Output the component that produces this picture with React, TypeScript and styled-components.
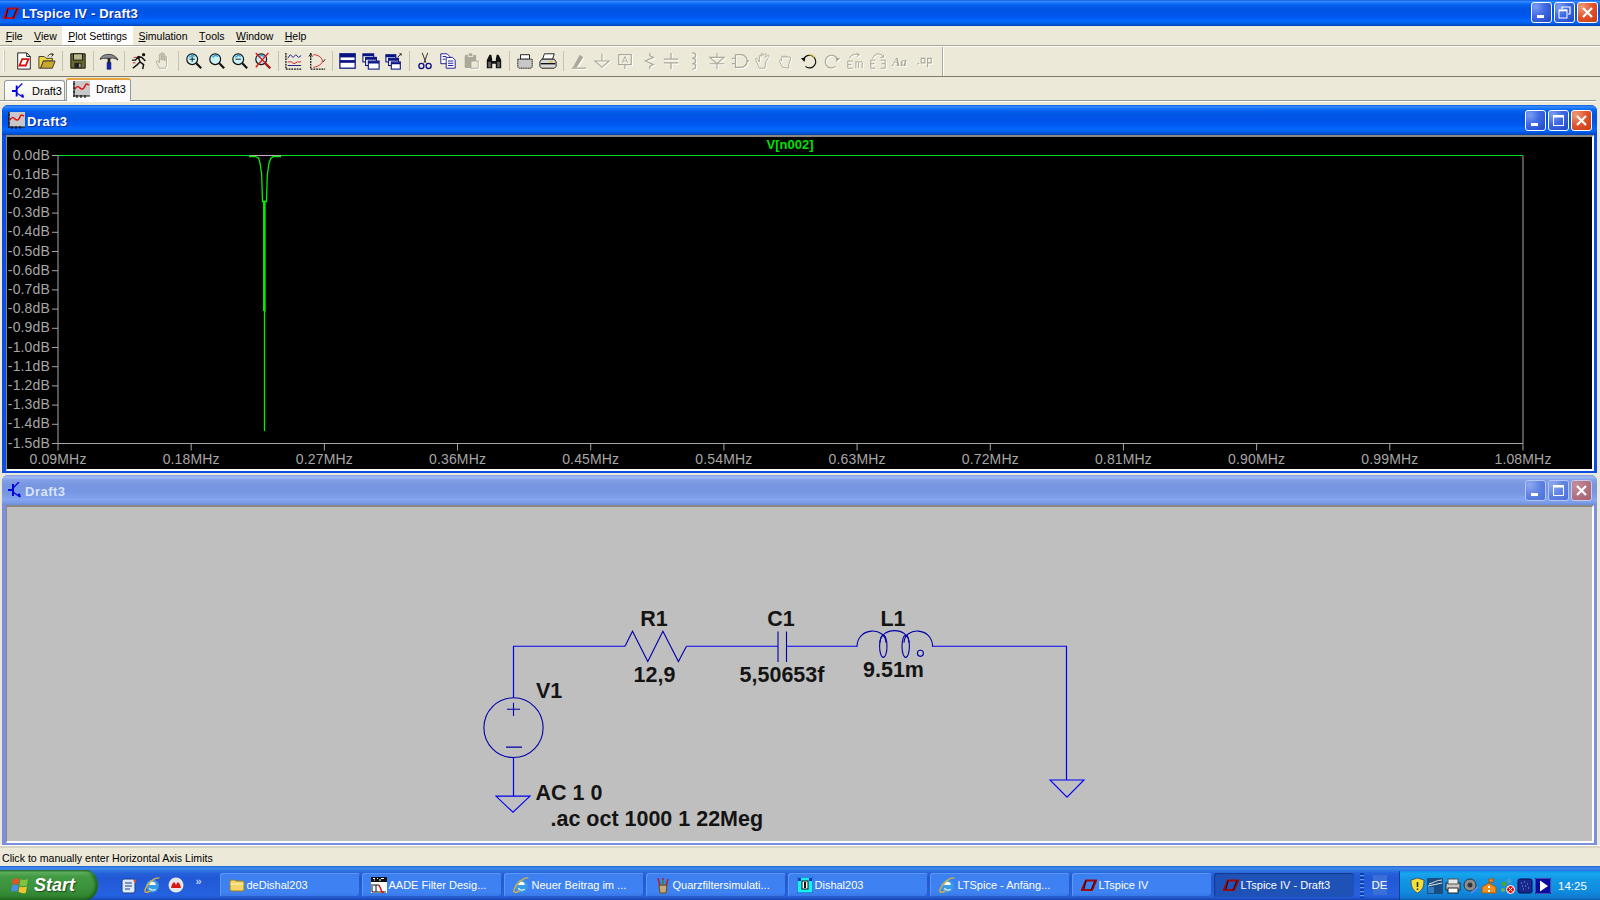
import React from "react";
import styled, { createGlobalStyle, css } from "styled-components";

const Global = createGlobalStyle`
  html, body { margin: 0; padding: 0; background: #ece9d8; }
  #root { width: 1600px; height: 900px; overflow: hidden; }
  * { box-sizing: border-box; }
`;

const UI = `"Liberation Sans", Arial, sans-serif`;
const ACTIVE_TITLE = `linear-gradient(to bottom,#0a5be6 0%,#3a8cfb 6%,#1273fb 12%,#0560ee 20%,#0055e4 34%,#0055ea 56%,#005bf5 68%,#0369ff 80%,#0060ee 88%,#0050d2 95%,#0040ab 100%)`;
const IDLE_TITLE = `linear-gradient(to bottom,#7f9ee6 0%,#a3bdf3 7%,#82a1e8 16%,#7796e0 34%,#7796e2 56%,#7c9de8 70%,#84a6f0 82%,#7b9ce6 92%,#6e8ad4 100%)`;

const Page = styled.div`
  width: 1600px; height: 900px; display: flex; flex-direction: column;
  background: #ece9d8; font-family: ${UI}; overflow: hidden;
`;
const AppTitle = styled.div`
  height: 26px; flex: none; display: flex; align-items: center; padding: 0 2px 1px 3px;
  background: ${ACTIVE_TITLE};
`;
const AppTitleText = styled.span`
  margin-left: 3px; padding-top: 2px; color: #fff; font-weight: 700; font-size: 13px; letter-spacing: 0.2px;
  text-shadow: 1px 1px 0 #0f2e9c;
`;
const Spacer = styled.div` flex: 1; `;
const BtnGroup = styled.div` display: flex; gap: 2px; `;
const TitleBtn = styled.div<{ $kind: "blue" | "red"; $idle?: boolean }>`
  width: 21px; height: 21px; border-radius: 3px; border: 1px solid #fff;
  display: flex; align-items: center; justify-content: center;
  ${(p) => p.$kind === "blue" && css`background: radial-gradient(circle at 20% 20%, #7c9ef3 0%, #3e68e4 45%, #1f47c6 100%);`}
  ${(p) => p.$kind === "red" && css`background: radial-gradient(circle at 20% 20%, #ef9a78 0%, #e0542c 50%, #c53b12 100%);`}
  ${(p) => p.$idle && p.$kind === "blue" && css`background: radial-gradient(circle at 20% 20%, #8fa9ee 0%, #5f82e2 50%, #4b6fd8 100%); border-color: #b4c6f4;`}
  ${(p) => p.$idle && p.$kind === "red" && css`background: radial-gradient(circle at 20% 20%, #c58c9c 0%, #b06f7e 60%, #a5606f 100%); border-color: #c9c8e8;`}
`;

const MenuBar = styled.div`
  height: 21px; flex: none; display: flex; align-items: stretch;
  border-bottom: 1px solid #fff; box-shadow: inset 0 -1px 0 #aca899;
  padding-bottom: 1px;
`;
const MenuItem = styled.div<{ $hot?: boolean }>`
  padding: 0 5.7px; display: flex; align-items: center; font-size: 10.5px; color: #000;
  background: ${(p) => (p.$hot ? "#fff" : "transparent")};
`;

const Toolbar = styled.div`
  height: 30px; flex: none; display: flex; align-items: center; padding: 0 0 2px 3px;
  border-bottom: 1px solid #7d7a6e;
`;
const ToolGrip = styled.div`
  width: 2px; height: 22px; margin-right: 7px; background: #fff; border-right: 1px solid #c8c5b2;
`;
const ToolSep = styled.div`
  width: 8px; height: 20px; display: flex; justify-content: center;
  &::before { content: ""; width: 1px; height: 100%; background: #c5c2b0; }
`;
const ToolBtn = styled.div`
  width: 23px; height: 24px; display: flex; align-items: center; justify-content: center;
`;
const ToolEnd = styled.div`
  height: 29px; width: 2px; margin: 2px 0 0 7px; background: #fff; border-left: 1px solid #aca899;
`;
const Ico = styled.svg<{ $off?: boolean }>`
  width: 18px; height: 18px; flex: none; overflow: visible;
  ${(p) => p.$off && css`color: #aca899; filter: drop-shadow(1px 1px 0 #fff);`}
`;

const TabStrip = styled.div` height: 28px; flex: none; padding: 0 4px 0 0; `;
const TabRow = styled.div`
  height: 24px; display: flex; align-items: flex-end; gap: 1px; padding-left: 4px;
  border-bottom: 1px solid #919b9c; box-shadow: 0 1px 0 #fff;
`;
const Tab = styled.div<{ $on?: boolean }>`
  display: flex; align-items: center; font-size: 11px; color: #000; border: 1px solid #919b9c;
  border-bottom: none; border-radius: 3px 3px 0 0;
  ${(p) =>
    p.$on
      ? css`width: 65px; height: 23px; padding: 0 0 3px 6px; gap: 6px; background: #fcfcfe; border-top: 2px solid #e8a33c; margin-bottom: -1px;`
      : css`width: 61px; height: 20px; padding: 0 2px 0 7px; gap: 6px; background: linear-gradient(#fff, #f2f1ea);`}
`;

const Mdi = styled.div`
  flex: none; height: 740px; display: flex; flex-direction: column; gap: 2px; padding: 0 3px 0 2px;
`;
const Win = styled.div<{ $idle?: boolean; $h: number }>`
  height: ${(p) => p.$h}px; flex: none; display: flex; flex-direction: column;
  border-radius: 6px 6px 0 0; overflow: hidden;
  background: ${(p) => (p.$idle ? "#7b8fdc" : "#0a4fe0")};
`;
const WinTitle = styled.div<{ $idle?: boolean }>`
  height: 30px; flex: none; display: flex; align-items: center; padding: 0 5px 0 6px; gap: 2px;
  background: ${(p) => (p.$idle ? IDLE_TITLE : ACTIVE_TITLE)};
`;
const WinTitleText = styled.span<{ $idle?: boolean }>`
  padding-top: 2px; font-size: 13px; font-weight: 700; letter-spacing: 0.5px;
  color: ${(p) => (p.$idle ? "#d8e4fb" : "#fff")};
  ${(p) => !p.$idle && css`text-shadow: 1px 1px 0 #0f2e9c;`}
`;
const WinBody = styled.div`
  flex: 1; min-height: 0; margin: 0 3px 2px 4px; border-top: 2px solid #8a8880; border-left: 1px solid #8a8880;
  border-right: 2px solid #fff; border-bottom: 2px solid #fff; display: flex;
`;
const PlotSvg = styled.svg` display: block; width: 100%; height: 100%; background: #000; `;
const SchemSvg = styled.svg` display: block; width: 100%; height: 100%; background: #bfbfbf; `;
const AxisText = styled.text`
  font-family: ${UI}; font-size: 14px; letter-spacing: 0.15px; fill: #a6a6a6;
`;
const TraceName = styled.text`
  font-family: ${UI}; font-size: 13px; font-weight: 700; fill: #00e000; text-anchor: middle;
`;
const SchemText = styled.text`
  font-family: ${UI}; font-size: 21.5px; font-weight: 700; fill: #141414;
`;

const StatusBar = styled.div`
  height: 21px; flex: none; display: flex; align-items: center; padding: 4px 0 0 2px; font-size: 10.6px; color: #000;
  border-top: 1px solid #fff; box-shadow: inset 0 2px 0 #d8d5c4;
`;

const Taskbar = styled.div`
  height: 34px; flex: none; display: flex; align-items: stretch; padding-top: 4px;
  background: linear-gradient(to bottom,#1f5fd0 0%,#3a86ea 5%,#3c87e8 9%,#2e74e0 14%,#2561da 22%,#2158d5 36%,#245ddb 60%,#2562df 86%,#2158d4 93%,#1d4ec0 97%,#1941a5 100%);
`;
const StartBtn = styled.div`
  width: 98px; flex: none; display: flex; align-items: center; padding-left: 11px; gap: 4px;
  border-radius: 0 12px 12px 0 / 0 15px 15px 0;
  background: linear-gradient(to bottom,#2f7a2f 0%,#5cad5c 8%,#439a43 22%,#3c923c 60%,#308530 86%,#236f23 100%);
  box-shadow: inset -3px 0 3px rgba(0,50,0,.45);
`;
const StartText = styled.span`
  color: #fff; font-size: 18px; font-style: italic; font-weight: 700; text-shadow: 1px 1px 1px #1a4a1a;
`;
const Grip = styled.div<{ $ml?: number }>`
  width: 4px; margin: 3px 1px 2px ${(p) => p.$ml ?? 1}px; flex: none;
  background: repeating-linear-gradient(to bottom,#0e3fa8 0 2px,#5d9af0 2px 3px,transparent 3px 4px);
`;
const QuickBar = styled.div` display: flex; align-items: center; padding-left: 2px; `;
const QuickIcon = styled.div`
  width: 23.5px; display: flex; justify-content: center;
`;
const Chevron = styled.span`
  width: 22px; text-align: center; color: #bcd4fa; font-size: 11px; font-weight: 700; margin-top: -8px;
`;
const TaskBtns = styled.div` display: flex; gap: 2px; margin-left: 4px; padding: 3px 0; `;
const TaskBtn = styled.div<{ $on?: boolean }>`
  width: 140px; height: 24px; display: flex; align-items: center; gap: 2px; padding-left: 9px;
  border-radius: 3px; color: #fff; font-size: 11px; white-space: nowrap; overflow: hidden;
  background: ${(p) => (p.$on ? "#1e52b7" : "linear-gradient(to bottom,#3c7ff0,#3e82f3 80%,#3775e4)")};
  box-shadow: ${(p) => (p.$on ? "inset 1px 1px 1px #143a86" : "inset 1px 1px 0 #5d97f7, inset -1px -1px 0 #2a5cc8")};
`;
const LangBox = styled.div`
  width: 14px; height: 20px; margin: 5px 0 0 8px; background: #3a6fd8; color: #fff; font-size: 11.5px;
  display: flex; align-items: center; justify-content: center;
`;
const Tray = styled.div`
  margin-left: auto; margin-top: 1px; width: 201px; flex: none; display: flex; align-items: center; padding-left: 8px;
  background: linear-gradient(to bottom,#0f8de6 0%,#17a6ee 8%,#1297e5 30%,#0f8cdf 70%,#1079cf 92%,#0b5ea8 100%);
  border-left: 1px solid #0a3f96;
`;
const TrayIcon = styled.div` width: 18px; display: flex; justify-content: center; `;
const Clock = styled.span` margin-left: 6px; color: #fff; font-size: 11.5px; `;

/* -------- icons -------- */
const Logo = ({ s = 16, c = "#a00808" }: { s?: number; c?: string }) => (
  <svg width={s} height={s} viewBox="0 0 16 16" fill="none">
    <path d="M1 13 5 3.500h10L11 13z" stroke={c} strokeWidth="2.200" />
    <path d="M5 3.500 2.800 13M14 3.500 10 13" stroke="#300" strokeWidth="1" />
  </svg>
);
const Transistor = () => (
  <svg width="15" height="16" viewBox="0 0 15 16" fill="none" stroke="#0000e0">
    <path d="M0 8h5M5 2v12" strokeWidth="2" />
    <path d="M5 6l6-6M5 10l7 5" strokeWidth="1.3" />
    <path d="M9 12l4 3.500-1-4z" fill="#0000e0" stroke="none" />
  </svg>
);
const ChartMini = () => (
  <svg width="17" height="17" viewBox="0 0 17 17">
    <rect x="1" width="16" height="15" fill="#c8c8c8" />
    <path d="M1 0v16M0 3h2M0 7h2M0 11h2M0 15h17M4 14v3M8 14v3M12 14v3" stroke="#111" strokeWidth="1.2" />
    <path d="M2 8c2-3 3-3 5-1s4 1 5-2 2-2 4-1" stroke="#e01010" strokeWidth="1.5" fill="none" />
  </svg>
);
const Glass = ({ extra, glyph }: { extra?: React.ReactNode; glyph?: React.ReactNode }) => (
  <Ico viewBox="0 0 20 20" fill="none">
    <circle cx="8" cy="8" r="6" fill="#c8f4f8" stroke="#111" strokeWidth="1.3" />
    <path d="M5 6a4 4 0 0 1 6-1" stroke="#20a0e0" strokeWidth="1.5" />
    <path d="M12.500 12.500 18 18" stroke="#111" strokeWidth="2.4" />
    {glyph}
    {extra}
  </Ico>
);
const P = ({ d, w = 1.2, f = "none", c = "currentColor" }: { d: string; w?: number; f?: string; c?: string }) => (
  <path d={d} stroke={c} strokeWidth={w} fill={f} />
);

const toolbarGroups: React.ReactNode[][] = [
  [
    <Ico viewBox="0 0 20 20"><path d="M3 1h10l4 4v14H3z" fill="#fff" stroke="#111" /><path d="M13 1v4h4" fill="none" stroke="#111" /><path d="M5 15l3-7h7l-3 7z" fill="none" stroke="#d81010" strokeWidth="2" /></Ico>,
    <Ico viewBox="0 0 20 20"><path d="M1 5h6l2 2h7v3H6l-3 8H1z" fill="#f0d840" stroke="#333" /><path d="M3 18l3-8h13l-3 8z" fill="#c8a830" stroke="#333" /><path d="M11 5c1-3 4-3 6-2M15 1l2 2-2 2" fill="none" stroke="#111" /></Ico>,
  ],
  [
    <Ico viewBox="0 0 20 20"><path d="M2 2h16v16H2z" fill="#6a6a2a" stroke="#111" /><rect x="5" y="2" width="10" height="7" fill="#b8b890" stroke="#111" /><rect x="6" y="12" width="8" height="6" fill="#222" /><rect x="11" y="13" width="2" height="4" fill="#999" /></Ico>,
  ],
  [
    <Ico viewBox="0 0 20 20"><path d="M0 8C2 3 8 2 13 3c3 1 6 3 7 6-3-2-6-3-8-2H4z" fill="#8c8c94" stroke="#333" /><rect x="8.500" y="7" width="3" height="6" fill="#202020" /><rect x="8" y="12" width="4" height="7" fill="#1024b8" stroke="#0a1880" /></Ico>,
  ],
  [
    <Ico viewBox="0 0 20 20"><circle cx="14" cy="3" r="1.800" fill="#111" /><path d="M1 9h4l3-4 4 1 4 4M8 5l2 6-3 3-5 4M10 11l4 3-1 5" fill="none" stroke="#111" strokeWidth="1.6" /><path d="M3 6h4M2 12h3" stroke="#c02020" /></Ico>,
    <Ico $off viewBox="0 0 20 20"><P d="M6 18c-2-4-4-6-3-8 1-1 2 0 3 2V3.500c0-2 2-2 2 0V9V2c0-2 2-2 2 0v7V3c0-2 2-2 2 0v7-4c0-2 2-2 2 0v8c0 2-1 3-1 4z" w={1} f="#ece9d8" /></Ico>,
  ],
  [
    <Glass glyph={<path d="M5 8h6M8 5v6" stroke="#111" />} />,
    <Glass />,
    <Glass glyph={<path d="M5 8h6" stroke="#111" />} />,
    <Glass extra={<path d="M2 1l16 17M16 1 2 17" stroke="#e01818" strokeWidth="1.6" />} />,
  ],
  [
    <Ico viewBox="0 0 20 20" fill="none"><path d="M1 1v18h18" stroke="#111" strokeDasharray="2 1" strokeWidth="1.5" /><path d="M3 7l3-4 3 3 3-3 3 3 3-2" stroke="#10108a" /><path d="M3 11h4l3 2 4-2h4" stroke="#d81818" /><path d="M3 15h15" stroke="#10108a" /></Ico>,
    <Ico viewBox="0 0 20 20" fill="none"><path d="M3 1v18h16" stroke="#111" strokeDasharray="2 1" strokeWidth="1.5" /><path d="M6 3c6 0 10 4 10 7s-4 6-10 7" stroke="#d81818" /><path d="M1 5 3 2l2 3M19 8l-2 3" stroke="#111" /></Ico>,
  ],
  [
    <Ico viewBox="0 0 20 20"><rect x="1" y="2" width="17" height="16" fill="#fff" stroke="#0a1480" strokeWidth="1.4" /><rect x="1" y="2" width="17" height="4" fill="#0a1480" /><rect x="1" y="9" width="17" height="3" fill="#0a1480" /></Ico>,
    <Ico viewBox="0 0 20 20"><g fill="#fff" stroke="#0a1480" strokeWidth="1.2"><rect x="1" y="2" width="12" height="9" /><rect x="4" y="6" width="12" height="9" /><rect x="7" y="10" width="12" height="9" /></g><path d="M1 3.500h12M4 7.500h12M7 11.500h12" stroke="#0a1480" strokeWidth="2.400" /></Ico>,
    <Ico viewBox="0 0 20 20"><g fill="#fff" stroke="#0a1480" strokeWidth="1.2"><rect x="1" y="3" width="11" height="8" /><rect x="4" y="7" width="11" height="8" /><rect x="7" y="11" width="10" height="8" /></g><path d="M1 4.500h11M4 8.500h11M7 12.500h10" stroke="#0a1480" strokeWidth="2.400" /><path d="M14 6l4-4M16 2h2v2" stroke="#222" fill="none" /></Ico>,
  ],
  [
    <Ico viewBox="0 0 20 20" fill="none" stroke="#10108a"><path d="M7 1l4 11M13 1 9 12" stroke="#222" /><circle cx="6" cy="15.500" r="2.800" strokeWidth="1.500" /><circle cx="14" cy="15.500" r="2.800" strokeWidth="1.500" /></Ico>,
    <Ico viewBox="0 0 20 20" fill="#fff" stroke="#10108a"><path d="M2 2h7l3 3v8H2z" /><path d="M8 6h7l3 3v9H8z" /><path d="M4 5h4M4 8h3M10 10h6M10 12.500h6M10 15h6" fill="none" /></Ico>,
    <Ico $off viewBox="0 0 20 20"><rect x="3" y="3" width="13" height="15" rx="2" fill="currentColor" /><rect x="7" y="1" width="5" height="4" fill="currentColor" stroke="#ece9d8" /><rect x="10" y="10" width="8" height="8" fill="#ece9d8" stroke="currentColor" /></Ico>,
    <Ico viewBox="0 0 20 20"><path d="M2 9 5 3h2l1 5v2h4V8l1-5h2l3 6v9h-6v-5H8v5H2z" fill="#111" /><rect x="3.500" y="11" width="3" height="6" fill="#666" /><rect x="13.500" y="11" width="3" height="6" fill="#666" /></Ico>,
  ],
  [
    <Ico viewBox="0 0 20 20"><path d="M5 3h10v5H5z" fill="#fff" stroke="#111" /><path d="M2 8h16v8a2 2 0 0 1-2 2H4a2 2 0 0 1-2-2z" fill="#c8c8c8" stroke="#111" strokeDasharray="1.500 .5" /></Ico>,
    <Ico viewBox="0 0 20 20"><path d="M6 2h11l-2 6H4z" fill="#fff" stroke="#111" /><path d="M3 8h14l2 3v5l-2 2H3l-2-2v-5z" fill="#d8d8d8" stroke="#111" /><path d="M2 13h16" stroke="#111" strokeWidth="1.500" /><rect x="11" y="10" width="4" height="1.500" fill="#e8c020" /></Ico>,
  ],
  [
    <Ico $off viewBox="0 0 20 20"><P d="M2 18h16" w={1.4} /><P d="M4 17 11 4l3 2-7 11z" f="currentColor" /></Ico>,
    <Ico $off viewBox="0 0 20 20"><P d="M10 2v8M2 10h16l-8 7z" w={1.2} /></Ico>,
    <Ico $off viewBox="0 0 20 20"><P d="M3 3h14v11H3zM10 14v5" w={1.3} /><P d="M7 12 10 5l3 7M8 10h4" w={1} /></Ico>,
    <Ico $off viewBox="0 0 20 20"><P d="M12 1v3l4 2-9 4 9 4-4 2v3" w={1.3} /></Ico>,
    <Ico $off viewBox="0 0 20 20"><P d="M10 1v7M2 8h16M2 12h16M10 12v7" w={1.4} /></Ico>,
    <Ico $off viewBox="0 0 20 20"><P d="M8 1c5 0 5 6 0 6 5 0 5 6 0 6 5 0 5 6 0 6" w={1.4} /></Ico>,
    <Ico $off viewBox="0 0 20 20"><P d="M10 1v5M2 6h16l-8 7zM2 13h16M10 13v6" w={1.2} /></Ico>,
    <Ico $off viewBox="0 0 20 20"><P d="M5 3h6a7 7 0 0 1 0 14H5zM1 7h4M1 13h4M17 10h3" w={1.4} /></Ico>,
    <Ico $off viewBox="0 0 20 20"><P d="M6 18 2 9c-1-2 1-3 2-1l2 3 0-6c0-2 2-2 2 0V3c0-2 2-2 2 0v1l2-2c2-1 2 1 1 2l-1 2 3-2c2-1 2 1 1 2l-3 5-1 7z" w={1} /></Ico>,
    <Ico $off viewBox="0 0 20 20"><P d="M6 17 3 11c-1-2 1-3 2-1V6c0-2 2-2 2 0 0-2 2-2 2 0 0-2 2-2 2 0 0-1 2-1 2 0 1-1 3 0 2 2l-2 6v4z" w={1} /></Ico>,
    <Ico viewBox="0 0 20 20" fill="none"><path d="M4 8a7 7 0 1 1 2 8" stroke="#111" strokeWidth="1.300" /><path d="M10 3a7 7 0 0 1 6 3" stroke="#d8c020" strokeWidth="1.300" /><path d="M1 7l5-1-1 5z" fill="#111" /></Ico>,
    <Ico $off viewBox="0 0 20 20"><P d="M16 8a7 7 0 1 0-2 8" w={1.3} /><path d="M19 7l-5-1 1 5z" fill="currentColor" /></Ico>,
    <Ico $off viewBox="0 0 20 20"><P d="M4 7c1-4 6-5 10-4M12 1l3 2-3 2M2 10h6M2 10v8h6M2 14h4M11 10v8M11 12c1-2 3-2 3 0v6M14 12c1-2 4-2 4 0v6" w={1.1} /></Ico>,
    <Ico $off viewBox="0 0 20 20"><P d="M4 7c1-3 4-5 6-5s5 1 6 4M16 3v3h-3M2 9h5M2 9v9h5M2 13h4M18 9h-5M18 9v9h-5M18 13h-4" w={1.1} /></Ico>,
    <Ico $off viewBox="0 0 20 20"><text x="0" y="16" fontFamily="Liberation Serif, serif" fontStyle="italic" fontWeight="700" fontSize="14" fill="currentColor">Aa</text></Ico>,
    <Ico $off viewBox="0 0 20 20"><P d="M3 13h1.500M7 7h4v5H7zM14 7h4v5h-4zM14 12v5" w={1.3} /></Ico>,
  ],
];

const XpFlag = () => (
  <svg width="19" height="19" viewBox="0 0 18 18">
    <path d="M2 3c2-1 4-1 6 0l-1 5c-2-1-4-1-6 0z" fill="#e8502a" />
    <path d="M9 3c2 1 4 1 7 0l-1 6c-3 1-5 1-7 0z" fill="#7ec43c" />
    <path d="M1 9c2-1 4-1 6 0l-1 6c-2-1-4-1-6 0z" fill="#4a8ee8" />
    <path d="M8 10c2 1 4 1 7 0l-1 6c-3 1-5 0-7-1z" fill="#f4c430" />
  </svg>
);
const IE = () => (
  <svg width="17" height="17" viewBox="0 0 16 16" fill="none">
    <circle cx="8" cy="8.500" r="6" fill="#3a9be6" />
    <path d="M5 7.500a3 3 0 0 1 6 0z" fill="#fff" />
    <path d="M5 10.500c1 2 4 2.500 6 1" stroke="#d8effc" strokeWidth="1.200" />
    <path d="M14.500 1C10 0 3 6 1 12c-1 3 2 3 5 1" stroke="#d8b040" strokeWidth="1.300" />
  </svg>
);
const FolderIcon = () => (
  <svg width="16" height="16" viewBox="0 0 16 16">
    <path d="M1 4l1-1h4l1 1h7l1 1v8l-1 1H2l-1-1z" fill="#f4d668" stroke="#9a7c20" />
    <path d="M1.500 7h13" stroke="#fff4b8" />
  </svg>
);
const AadeIcon = () => (
  <svg width="16" height="16" viewBox="0 0 16 16">
    <rect width="16" height="16" fill="#fff" />
    <rect width="16" height="5" fill="#111" />
    <path d="M2 1.500h2M6 1.500h1M10 1.500h3M3 3h1M8 3h2" stroke="#fff" />
    <path d="M1 15V7M1 15h14M5 15V8M2 8h6" stroke="#111" />
    <path d="M8 8l3 7h2" stroke="#e01010" strokeWidth="1.500" fill="none" />
  </svg>
);
const Brushes = () => (
  <svg width="16" height="17" viewBox="0 0 16 17">
    <path d="M4 8h8l-1 8H5z" fill="#c8a878" stroke="#6a4a20" />
    <path d="M5 9 3 1M8 9V1M11 9l2-7" stroke="#b02020" strokeWidth="1.500" />
    <path d="M8 9V3" stroke="#20a040" strokeWidth="1.500" />
  </svg>
);
const DishalIcon = () => (
  <svg width="16" height="16" viewBox="0 0 16 16">
    <rect width="16" height="16" fill="#18f0f0" stroke="#2030c0" />
    <rect x="5" y="4" width="6" height="8" fill="#fff" stroke="#111" />
    <rect x="7" y="5" width="2" height="6" fill="#111" />
    <path d="M1 1h3v3H1zM12 1h3v3h-3z" fill="#2030c0" />
  </svg>
);

const tray: React.ReactNode[] = [
  <svg width="15" height="17" viewBox="0 0 15 17"><path d="M7.500 1 14 3c0 6-1 10-6.500 13C2 13 1 9 1 3z" fill="#f4e038" stroke="#405080" /><path d="M7.500 5v5M7.500 11.500v1.500" stroke="#222" strokeWidth="1.500" /></svg>,
  <svg width="16" height="16" viewBox="0 0 16 16"><rect width="16" height="16" fill="#1a4e82" /><path d="M2 6c4-1 8-4 13-4M1 8l14-3" stroke="#e8e8e8" /><rect x="1" y="9" width="6" height="6" fill="#2f7fc8" /></svg>,
  <svg width="16" height="16" viewBox="0 0 16 16"><rect x="1" y="5" width="14" height="7" fill="#c8c8c8" stroke="#222" /><rect x="3" y="1" width="10" height="5" fill="#e8e8e8" stroke="#555" /><rect x="3" y="10" width="10" height="5" fill="#fff" stroke="#222" /></svg>,
  <svg width="16" height="16" viewBox="0 0 16 16"><circle cx="7" cy="7" r="6" fill="#8a8e92" stroke="#333" /><circle cx="7" cy="7" r="2.500" fill="#333" /><path d="M8 15l7-6" stroke="#7a8ae8" strokeWidth="1.500" /></svg>,
  <svg width="16" height="16" viewBox="0 0 16 16"><path d="M1 9l7-4 7 4v6H1z" fill="#f09020" stroke="#a85a10" /><path d="M8 5V1h5l-1 2 1 1H8" fill="#f09020" stroke="#a85a10" /><rect x="7" y="8" width="2" height="2" fill="#fff" /><rect x="7" y="12" width="2" height="2" fill="#fff" /></svg>,
  <svg width="16" height="16" viewBox="0 0 16 16"><circle cx="5" cy="6" r="2.500" fill="#50a040" /><circle cx="10" cy="3" r="2.500" fill="#40a0c8" /><circle cx="4" cy="12" r="2" fill="#70b050" /><circle cx="11.500" cy="11.500" r="4" fill="#e01010" stroke="#fff" /><path d="M9.500 9.500l4 4M13.500 9.500l-4 4" stroke="#fff" /></svg>,
  <svg width="16" height="16" viewBox="0 0 16 16"><rect x="1" y="1" width="14" height="14" rx="2" fill="#18288c" stroke="#0a0a50" /><path d="M4 5h1M7 4h1M10 6h1M5 8h1M8 8h1M11 10h1M6 11h1" stroke="#80a0f0" /></svg>,
  <svg width="16" height="16" viewBox="0 0 16 16"><rect width="16" height="16" fill="#fff" stroke="#0a0a90" strokeWidth="1.500" /><rect x="1" y="1" width="14" height="14" fill="#0a0aa0" /><path d="M5 2.500v11l8-5.500z" fill="#fff" /></svg>,
];

const WinButtons = ({ idle, main }: { idle?: boolean; main?: boolean }) => (
  <BtnGroup>
    <TitleBtn $kind="blue" $idle={idle}>
      <svg width="13" height="13" viewBox="0 0 13 13"><rect x="2" y="9" width="7" height="3" fill="#fff" /></svg>
    </TitleBtn>
    <TitleBtn $kind="blue" $idle={idle}>
      {main ? (
        <svg width="13" height="13" viewBox="0 0 13 13" fill="none" stroke="#fff"><path d="M4 3V1h8v7h-2" strokeWidth="1.200" /><rect x="1" y="4" width="8" height="8" /><path d="M1 4.500h8" strokeWidth="1.600" /></svg>
      ) : (
        <svg width="13" height="13" viewBox="0 0 13 13" fill="none" stroke="#fff"><rect x="1.500" y="1.500" width="10" height="10" /><path d="M1.500 2.500h10" strokeWidth="2" /></svg>
      )}
    </TitleBtn>
    <TitleBtn $kind="red" $idle={idle}>
      <svg width="13" height="13" viewBox="0 0 13 13"><path d="M2 2l9 9M11 2l-9 9" stroke="#fff" strokeWidth="2.200" /></svg>
    </TitleBtn>
  </BtnGroup>
);

const Under = styled.u` text-underline-offset: 1px; `;
const menus: [string, string, boolean?][] = [
  ["F", "ile"], ["V", "iew"], ["P", "lot Settings", true], ["S", "imulation"], ["T", "ools"], ["W", "indow"], ["H", "elp"],
];
const tasks: [React.ReactNode, string, boolean?][] = [
  [<FolderIcon />, "deDishal203"],
  [<AadeIcon />, "AADE Filter Desig..."],
  [<IE />, "Neuer Beitrag im ..."],
  [<Brushes />, "Quarzfiltersimulati..."],
  [<DishalIcon />, "Dishal203"],
  [<IE />, "LTSpice - Anfäng..."],
  [<Logo />, "LTspice IV"],
  [<Logo />, "LTspice IV - Draft3", true],
];

const yLabels = ["0.0","-0.1","-0.2","-0.3","-0.4","-0.5","-0.6","-0.7","-0.8","-0.9","-1.0","-1.1","-1.2","-1.3","-1.4","-1.5"];
const xLabels = ["0.09","0.18","0.27","0.36","0.45","0.54","0.63","0.72","0.81","0.90","0.99","1.08"];
const PX0 = 58, PX1 = 1523, PY0 = 155.5, PY1 = 443.5;

const Plot = () => {
  const dy = (PY1 - PY0) / 15;
  const dx = (PX1 - PX0) / 11;
  return (
    <PlotSvg viewBox="7 137 1585 332" preserveAspectRatio="none">
      <path d={`M${PX0} ${PY0}V${PY1}H${PX1}V${PY0}`} fill="none" stroke="#a6a6a6" />
      {yLabels.map((l, i) => (
        <g key={l}>
          <path d={`M${PX0 - 6} ${PY0 + i * dy}H${PX0}`} stroke="#a6a6a6" />
          <AxisText x={50} y={PY0 + i * dy + 4} textAnchor="end">{l}dB</AxisText>
        </g>
      ))}
      {xLabels.map((l, i) => (
        <g key={l}>
          <path d={`M${PX0 + i * dx} ${PY1}v7`} stroke="#a6a6a6" />
          <AxisText x={PX0 + i * dx} y={464} textAnchor="middle">{l}MHz</AxisText>
        </g>
      ))}
      <path d={`M${PX0} ${PY0}H${PX1}`} stroke="#00e020" />
      <path d="M250 155.500H281" stroke="#c8a8c8" />
      <path d="M249 156.500H255L258.500 158L260 163L261.700 175L262.500 201.500H263.700V311M264.500 431V311H265V201.500H266.500L267.300 175L269 163L271 158L274 156.500H281" fill="none" stroke="#00f000" strokeWidth="1.300" />
      <TraceName x={790} y={149}>V[n002]</TraceName>
    </PlotSvg>
  );
};

const Schematic = () => (
  <SchemSvg viewBox="7 507 1585 331" preserveAspectRatio="none">
    <g fill="none" stroke="#0000f0" strokeWidth="1.200">
      <path d="M513.500 696V645H625M686.500 645H778M786.500 645H857M932.600 645H1066.500V777.500M513.500 755V793.500" />
    </g>
    <g fill="none" stroke="#0000a8" strokeWidth="1.100">
      <g transform="translate(0 -1.500)">
        <path d="M625 646.500L632.500 631.700L647.800 661.700L662.900 631.700L678.400 661.700L686.500 646.500" />
        <path d="M778 632V662M786.500 632V662" />
        <path d="M857 647C857 627 886 627 886 643M880 643C880 627 909 627 909 643M904 643C904 627 932.600 627 932.600 647" />
        <ellipse cx="883.300" cy="646.500" rx="3.700" ry="11" />
        <ellipse cx="905.700" cy="646.500" rx="3.700" ry="11" />
        <circle cx="920.400" cy="653.500" r="3" />
      </g>
      <circle cx="513.500" cy="725.700" r="29.600" />
      <path d="M507 707.500H520M513.500 701V714M506 745H522" />
      <path d="M496 793.500H530L513 809.500Z" stroke="#0000f0" />
      <path d="M1050 777.500H1084L1067 794.500Z" stroke="#0000f0" />
    </g>
    <SchemText x={654} y={625} textAnchor="middle">R1</SchemText>
    <SchemText x={781} y={625} textAnchor="middle">C1</SchemText>
    <SchemText x={893} y={625} textAnchor="middle">L1</SchemText>
    <SchemText x={654.500} y={680} textAnchor="middle">12,9</SchemText>
    <SchemText x={782} y={680} textAnchor="middle">5,50653f</SchemText>
    <SchemText x={893.500} y={675} textAnchor="middle">9.51m</SchemText>
    <SchemText x={536} y={696}>V1</SchemText>
    <SchemText x={535.500} y={797}>AC 1 0</SchemText>
    <SchemText x={550.500} y={823}>.ac oct 1000 1 22Meg</SchemText>
  </SchemSvg>
);

export default function App() {
  return (
    <Page>
      <Global />
      <AppTitle>
        <Logo c="#c00c18" />
        <AppTitleText>LTspice IV - Draft3</AppTitleText>
        <Spacer />
        <WinButtons main />
      </AppTitle>
      <MenuBar>
        {menus.map(([u, r, hot]) => (
          <MenuItem key={u} $hot={hot}><Under>{u}</Under>{r}</MenuItem>
        ))}
      </MenuBar>
      <Toolbar>
        <ToolGrip />
        {toolbarGroups.map((g, i) => (
          <React.Fragment key={i}>
            {i > 0 && <ToolSep />}
            {g.map((ic, j) => <ToolBtn key={j}>{ic}</ToolBtn>)}
          </React.Fragment>
        ))}
        <ToolEnd />
      </Toolbar>
      <TabStrip>
        <TabRow>
          <Tab><Transistor />Draft3</Tab>
          <Tab $on><ChartMini />Draft3</Tab>
        </TabRow>
      </TabStrip>
      <Mdi>
        <Win $h={368}>
          <WinTitle>
            <ChartMini />
            <WinTitleText>Draft3</WinTitleText>
            <Spacer />
            <WinButtons />
          </WinTitle>
          <WinBody><Plot /></WinBody>
        </Win>
        <Win $idle $h={370}>
          <WinTitle $idle>
            <Transistor />
            <WinTitleText $idle>Draft3</WinTitleText>
            <Spacer />
            <WinButtons idle />
          </WinTitle>
          <WinBody><Schematic /></WinBody>
        </Win>
      </Mdi>
      <StatusBar>Click to manually enter Horizontal Axis Limits</StatusBar>
      <Taskbar>
        <StartBtn><XpFlag /><StartText>Start</StartText></StartBtn>
        <QuickBar>
          <Grip $ml={12} />
          <QuickIcon>
            <svg width="16" height="17" viewBox="0 0 16 17"><rect x="1" y="2" width="13" height="14" rx="2" fill="#dfe8f8" stroke="#14408c" /><path d="M4 6h7M4 9h7M4 12h5" stroke="#14408c" /><path d="M12 4l3-2v4z" fill="#e05020" /></svg>
          </QuickIcon>
          <QuickIcon><IE /></QuickIcon>
          <QuickIcon>
            <svg width="16" height="16" viewBox="0 0 16 16"><circle cx="8" cy="8" r="7.500" fill="#e8e8ec" /><path d="M3 11c1-5 3-7 4-5l1 2 1-2c1-2 3 0 4 5z" fill="#d81818" /></svg>
          </QuickIcon>
          <Chevron>»</Chevron>
          <Grip />
        </QuickBar>
        <TaskBtns>
          {tasks.map(([ic, t, on]) => (
            <TaskBtn key={t} $on={on}>{ic}{t}</TaskBtn>
          ))}
        </TaskBtns>
        <Grip $ml={6} />
        <LangBox>DE</LangBox>
        <Tray>
          {tray.map((t, i) => <TrayIcon key={i}>{t}</TrayIcon>)}
          <Clock>14:25</Clock>
        </Tray>
      </Taskbar>
    </Page>
  );
}
